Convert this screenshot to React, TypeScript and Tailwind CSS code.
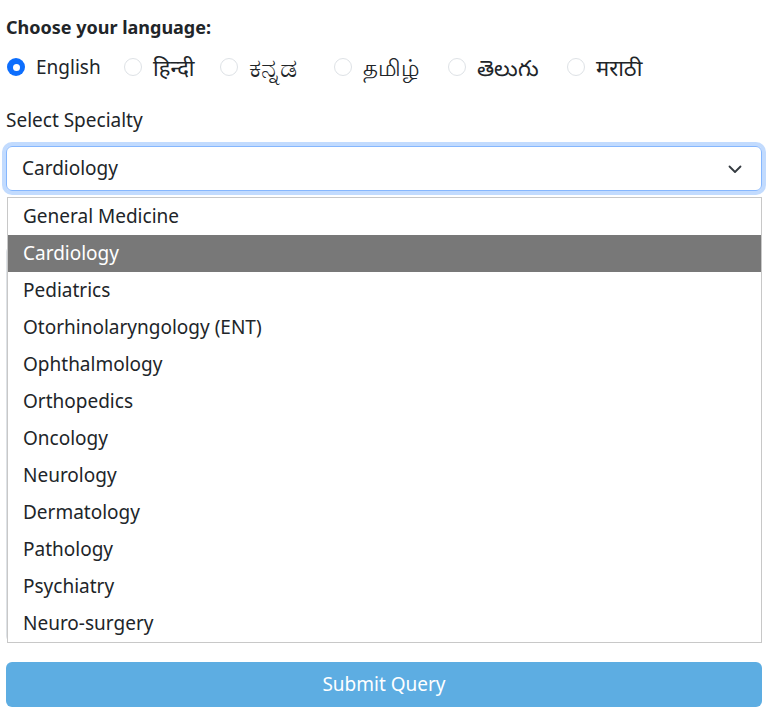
import { useState } from "react";

// widths keep each radio where the reference has it; sizes compensate the fallback Indic fonts
const LANGS = [
  { label: "English", w: "w-[117px]", size: "text-[19px]" },
  { label: "हिन्दी", w: "w-[96px]", size: "text-[22px]" },
  { label: "ಕನ್ನಡ", w: "w-[114px]", size: "text-[27px]" },
  { label: "தமிழ்", w: "w-[114px]", size: "text-[23px]" },
  { label: "తెలుగు", w: "w-[119px]", size: "text-[22px]" },
  { label: "मराठी", w: "w-[100px]", size: "text-[22px]" },
];

const SPECIALTIES = [
  "General Medicine",
  "Cardiology",
  "Pediatrics",
  "Otorhinolaryngology (ENT)",
  "Ophthalmology",
  "Orthopedics",
  "Oncology",
  "Neurology",
  "Dermatology",
  "Pathology",
  "Psychiatry",
  "Neuro-surgery",
];

function Radio({ checked }: { checked: boolean }) {
  if (checked) {
    return (
      <span className="flex h-[18px] w-[18px] shrink-0 items-center justify-center rounded-full bg-[#0d6efd]">
        <span className="h-[7px] w-[7px] rounded-full bg-white" />
      </span>
    );
  }
  return <span className="h-[18px] w-[18px] shrink-0 rounded-full border border-[#dee2e6] bg-white" />;
}

export default function App() {
  const [lang, setLang] = useState("English");
  const selected = "Cardiology";

  return (
    <div
      className="min-h-[712px] bg-white pl-[6px] pr-[5px] text-[19px] text-[#212529]"
      style={{ fontFamily: '"Noto Sans", "Open Sans", sans-serif' }}
    >
      <h3 className="pt-[14px] text-[18px] font-bold leading-[26px]">Choose your language:</h3>

      {/* Language radios */}
      <div className="mt-[12px] flex h-[30px] items-center pl-[1px]">
        {LANGS.map((l) => (
          <label
            key={l.label}
            onClick={() => setLang(l.label)}
            className={`flex cursor-pointer items-center gap-[11px] ${l.w}`}
          >
            <Radio checked={lang === l.label} />
            <span className={`${l.size} leading-[30px]`}>{l.label}</span>
          </label>
        ))}
      </div>

      <div className="mt-[24px] leading-[28px]">Select Specialty</div>

      {/* Select + open list */}
      <div className="relative mt-[12px]">
        <div className="flex h-[45px] items-center justify-between rounded-[6px] border border-[#86b7fe] pl-[15px] pr-[18px] shadow-[0_0_0_4px_rgba(13,110,253,0.25)]">
          <span>{selected}</span>
          <svg width="16" height="16" viewBox="0 0 16 16" fill="none">
            <path d="M2.5 5.5 8 11l5.5-5.5" stroke="#343a40" strokeWidth="1.8" strokeLinecap="round" strokeLinejoin="round" />
          </svg>
        </div>

        <ul className="absolute left-[1px] right-0 top-[51px] z-10 border border-[#c8c8c8] bg-white">
          {SPECIALTIES.map((s) => (
            <li
              key={s}
              className={
                s === selected
                  ? "flex h-[37px] items-center bg-[#787878] pl-[15px] text-white"
                  : "flex h-[37px] items-center pl-[15px] text-[#212529]"
              }
            >
              {s}
            </li>
          ))}
        </ul>
      </div>

      {/* Query box, hidden behind the open list */}
      <textarea className="mt-[55px] block h-[396px] w-full resize-none rounded-[6px] border border-[#dee2e6]" />

      <button className="mt-[20px] flex h-[45px] w-full items-center justify-center rounded-[6px] bg-[#5dade2] text-white">
        Submit Query
      </button>
    </div>
  );
}
